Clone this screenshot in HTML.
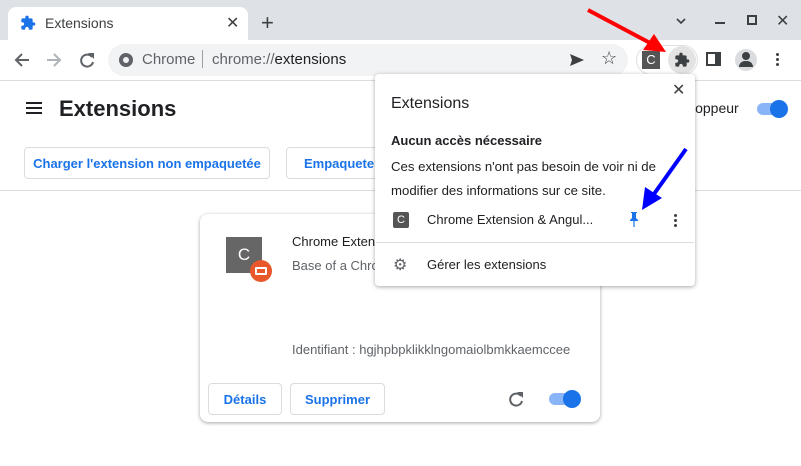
<!DOCTYPE html><html><head><meta charset="utf-8"><style>
*{margin:0;padding:0;box-sizing:border-box}
body{width:801px;height:466px;overflow:hidden;background:#fff;font-family:"Liberation Sans",sans-serif;position:relative}
.a{position:absolute}
.btn{position:absolute;border:1px solid #dadce0;border-radius:4px;color:#1a73e8;font-weight:bold;font-size:13px;display:flex;align-items:center;justify-content:center;background:#fff}
</style></head><body>
<div class="a" style="left:0;top:0;width:801px;height:40px;background:#dee1e6"></div>
<div class="a" style="left:8px;top:7px;width:240px;height:33px;background:#fff;border-radius:8px 8px 0 0"></div>
<svg class="a" style="left:20px;top:15px" width="16" height="16" viewBox="0 0 24 24"><path fill="#1a73e8" d="M20.5 11H19V7c0-1.1-.9-2-2-2h-4V3.5a2.5 2.5 0 0 0-5 0V5H4c-1.1 0-2 .9-2 2v3.8h1.5c1.5 0 2.7 1.2 2.7 2.7S5 16.2 3.5 16.2H2V20c0 1.1.9 2 2 2h3.8v-1.5c0-1.5 1.2-2.7 2.7-2.7s2.7 1.200 2.7 2.7V22H17c1.1 0 2-.9 2-2v-4h1.5a2.5 2.5 0 0 0 0-5z"/></svg>
<div class="a" style="left:45px;top:15px;font-size:14px;color:#3c4043">Extensions</div>
<div class="a" style="left:226px;top:13px;font-size:16px;color:#3c4043">✕</div>
<div class="a" style="left:261px;top:10px;font-size:22px;color:#3c4043">+</div>
<svg class="a" style="left:676px;top:18px" width="10" height="6"><path d="M1 1l4 4 4-4" stroke="#3c4043" stroke-width="1.6" fill="none"/></svg>
<div class="a" style="left:715px;top:22px;width:10px;height:2px;background:#3c4043"></div>
<div class="a" style="left:747px;top:15px;width:10px;height:10px;border:2px solid #3c4043"></div>
<div class="a" style="left:776px;top:11px;font-size:16px;color:#3c4043">✕</div>
<!-- toolbar -->
<svg class="a" style="left:14px;top:52px" width="16" height="16"><path d="M15 8H2M8 2L2 8l6 6" stroke="#5f6368" stroke-width="2" fill="none"/></svg>
<svg class="a" style="left:46px;top:52px" width="16" height="16"><path d="M1 8h13M8 2l6 6-6 6" stroke="#b0b3b8" stroke-width="2" fill="none"/></svg>
<svg class="a" style="left:79px;top:52px" width="16" height="16"><path d="M13 5A6 6 0 1 0 14 10" stroke="#5f6368" stroke-width="2" fill="none"/><path d="M9 1h6v6z" fill="#5f6368"/></svg>
<div class="a" style="left:108px;top:44px;width:520px;height:32px;background:#f1f3f4;border-radius:16px"></div>
<div class="a" style="left:119px;top:53px;width:14px;height:14px;border-radius:50%;background:#5f6368"></div>
<div class="a" style="left:123px;top:57px;width:6px;height:6px;border-radius:50%;background:#f1f3f4"></div>
<div class="a" style="left:142px;top:51px;font-size:15px;color:#5f6368">Chrome</div>
<div class="a" style="left:202px;top:50px;width:1px;height:18px;background:#9aa0a6"></div>
<div class="a" style="left:212px;top:51px;font-size:15px;color:#5f6368">chrome://<span style="color:#202124">extensions</span></div>
<svg class="a" style="left:569px;top:53px" width="16" height="14"><path d="M1 1l14 6-14 6 2-6z" fill="#3c4043"/></svg>
<div class="a" style="left:601px;top:48px;font-size:18px;color:#3c4043">☆</div>
<div class="a" style="left:636px;top:45px;width:62px;height:30px;border:1px solid #e0e0e0;border-radius:15px"></div>
<div class="a" style="left:642px;top:51px;width:18px;height:18px;background:#555;color:#fff;font-size:13px;text-align:center;line-height:18px">C</div>
<div class="a" style="left:668px;top:46px;width:28px;height:28px;border-radius:50%;background:#e3e3e3"></div>
<svg class="a" style="left:674px;top:52px" width="16" height="16" viewBox="0 0 24 24"><path fill="#3c4043" d="M20.5 11H19V7c0-1.1-.9-2-2-2h-4V3.5a2.5 2.5 0 0 0-5 0V5H4c-1.1 0-2 .9-2 2v3.8h1.5c1.5 0 2.7 1.2 2.7 2.7S5 16.2 3.5 16.2H2V20c0 1.1.9 2 2 2h3.8v-1.5c0-1.5 1.2-2.7 2.7-2.7s2.7 1.2 2.7 2.7V22H17c1.1 0 2-.9 2-2v-4h1.5a2.5 2.5 0 0 0 0-5z"/></svg>
<div class="a" style="left:706px;top:52px;width:15px;height:14px;border:2px solid #3c4043;border-right-width:6px"></div>
<div class="a" style="left:735px;top:49px;width:22px;height:22px;border-radius:50%;background:#dadce0"></div>
<div class="a" style="left:742px;top:52px;width:8px;height:8px;border-radius:50%;background:#3c4043"></div>
<div class="a" style="left:739px;top:61px;width:14px;height:6px;border-radius:6px 6px 0 0;background:#3c4043"></div>
<div class="a" style="left:776px;top:53px;width:3px;height:3px;border-radius:50%;background:#3c4043;box-shadow:0 5px 0 #3c4043,0 10px 0 #3c4043"></div>
<div class="a" style="left:0;top:80px;width:801px;height:1px;background:#dadce0"></div>
<!-- page header -->
<div class="a" style="left:26px;top:102px;width:16px;height:2px;background:#202124;box-shadow:0 5px 0 #202124,0 10px 0 #202124"></div>
<div class="a" style="left:59px;top:96px;font-size:22px;font-weight:bold;color:#202124">Extensions</div>
<div class="a" style="left:692px;top:100px;font-size:14px;color:#202124">loppeur</div>
<div class="a" style="left:757px;top:103px;width:28px;height:12px;border-radius:6px;background:#8ab4f8"></div>
<div class="a" style="left:770px;top:100px;width:18px;height:18px;border-radius:50%;background:#1a73e8"></div>
<div class="btn" style="left:24px;top:147px;width:246px;height:32px">Charger l'extension non empaquetée</div>
<div class="btn" style="left:286px;top:147px;width:120px;height:32px;justify-content:flex-start;padding-left:17px">Empaqueter</div>
<div class="a" style="left:0;top:190px;width:801px;height:1px;background:#dadce0"></div>
<!-- card -->
<div class="a" style="left:200px;top:214px;width:400px;height:208px;border-radius:8px;background:#fff;box-shadow:0 1px 3px rgba(60,64,67,.35),0 1px 4px rgba(60,64,67,.15)"></div>
<div class="a" style="left:226px;top:237px;width:36px;height:36px;background:#666;color:#fff;font-size:17px;text-align:center;line-height:36px">C</div>
<div class="a" style="left:250px;top:260px;width:22px;height:22px;border-radius:50%;background:#e8582b"></div>
<div class="a" style="left:255px;top:267px;width:12px;height:8px;border:2px solid #fff;border-radius:1px"></div>
<div class="a" style="left:292px;top:234px;font-size:13px;color:#202124">Chrome Extens</div>
<div class="a" style="left:292px;top:258px;font-size:13px;color:#5f6368">Base of a Chro</div>
<div class="a" style="left:292px;top:342px;font-size:13px;color:#5f6368">Identifiant : hgjhpbpklikklngomaiolbmkkaemccee</div>
<div class="btn" style="left:208px;top:383px;width:74px;height:32px">Détails</div>
<div class="btn" style="left:290px;top:383px;width:95px;height:32px">Supprimer</div>
<svg class="a" style="left:508px;top:391px" width="16" height="16"><path d="M13 5A6 6 0 1 0 14 10" stroke="#5f6368" stroke-width="2" fill="none"/><path d="M9 1h6v6z" fill="#5f6368"/></svg>
<div class="a" style="left:549px;top:393px;width:28px;height:12px;border-radius:6px;background:#8ab4f8"></div>
<div class="a" style="left:563px;top:390px;width:18px;height:18px;border-radius:50%;background:#1a73e8"></div>
<!-- popup -->
<div class="a" style="left:375px;top:74px;width:320px;height:212px;background:#fff;border-radius:4px;box-shadow:0 1px 4px rgba(0,0,0,.35)"></div>
<div class="a" style="left:672px;top:80px;font-size:16px;color:#3c4043">✕</div>
<div class="a" style="left:391px;top:95px;font-size:16px;color:#202124">Extensions</div>
<div class="a" style="left:391px;top:133px;font-size:13px;font-weight:bold;color:#202124">Aucun accès nécessaire</div>
<div class="a" style="left:391px;top:155px;font-size:13.2px;color:#202124;line-height:24px">Ces extensions n'ont pas besoin de voir ni de<br>modifier des informations sur ce site.</div>
<div class="a" style="left:393px;top:212px;width:16px;height:16px;background:#555;color:#fff;font-size:11px;text-align:center;line-height:16px;border-radius:2px">C</div>
<div class="a" style="left:427px;top:212px;font-size:13px;color:#202124">Chrome Extension &amp; Angul...</div>
<svg class="a" style="left:628px;top:212px" width="12" height="16" viewBox="0 0 12 16"><path fill="#1a73e8" d="M3 0h6v1H8v5l2 2v1H6.6v6h-1.2V9H2V8l2-2V1H3z"/></svg>
<div class="a" style="left:674px;top:214px;width:3px;height:3px;border-radius:50%;background:#3c4043;box-shadow:0 5px 0 #3c4043,0 10px 0 #3c4043"></div>
<div class="a" style="left:376px;top:242px;width:318px;height:1px;background:#dadce0"></div>
<div class="a" style="left:393px;top:255px;font-size:16px;color:#5f6368">⚙</div>
<div class="a" style="left:427px;top:257px;font-size:13px;color:#202124">Gérer les extensions</div>
<!-- arrows -->
<svg class="a" style="left:0;top:0" width="801" height="466">
<line x1="588" y1="10" x2="652" y2="44" stroke="#f00" stroke-width="4"/>
<polygon points="666,52 643,50 654,34" fill="#f00"/>
<line x1="686" y1="149" x2="654" y2="194" stroke="#00f" stroke-width="4"/>
<polygon points="642,210 645,187 662,198" fill="#00f"/>
</svg>
</body></html>
